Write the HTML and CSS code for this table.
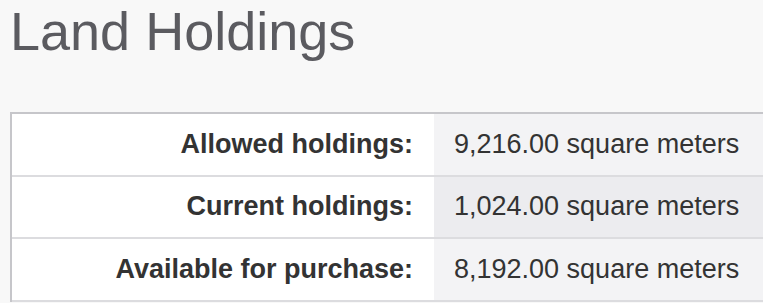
FILE: index.html
```html
<!DOCTYPE html>
<html lang="en">
<head>
<meta charset="utf-8">
<title>Land Holdings</title>
<link rel="stylesheet" href="styles.css">
</head>
<body>
<main class="page">
  <h1 class="title">Land Holdings</h1>
  <div class="holdings">
    <div class="label">Allowed holdings:</div>
    <div class="value">9,216.00 square meters</div>
    <div class="label">Current holdings:</div>
    <div class="value value-alt">1,024.00 square meters</div>
    <div class="label">Available for purchase:</div>
    <div class="value">8,192.00 square meters</div>
  </div>
</main>
</body>
</html>
```

FILE: styles.css
```css
html, body {
  margin: 0;
  padding: 0;
  overflow: hidden;
  background: #f8f8f8;
}

.page {
  font-family: "Liberation Sans", Arial, sans-serif;
  color: #333333;
  padding: 0 0 0 10px;
}

.title {
  margin: 0;
  font-size: 54px;
  font-weight: normal;
  line-height: 62px;
  color: #5b5b60;
}

.holdings {
  margin-top: 50px;
  display: grid;
  grid-template-columns: 422px 1fr;
  border-top: 2px solid #c6c6ca;
  border-left: 2px solid #c6c6ca;
  font-size: 27px;
}

.label,
.value {
  height: 60.5px;
  display: flex;
  align-items: center;
  border-bottom: 2px solid #dcdcdf;
  white-space: nowrap;
}

.label {
  justify-content: flex-end;
  padding-right: 21px;
  font-weight: bold;
  background: #ffffff;
}

.value {
  padding-left: 20px;
  background: #f3f3f5;
}

.value-alt {
  background: #ececef;
}
```
